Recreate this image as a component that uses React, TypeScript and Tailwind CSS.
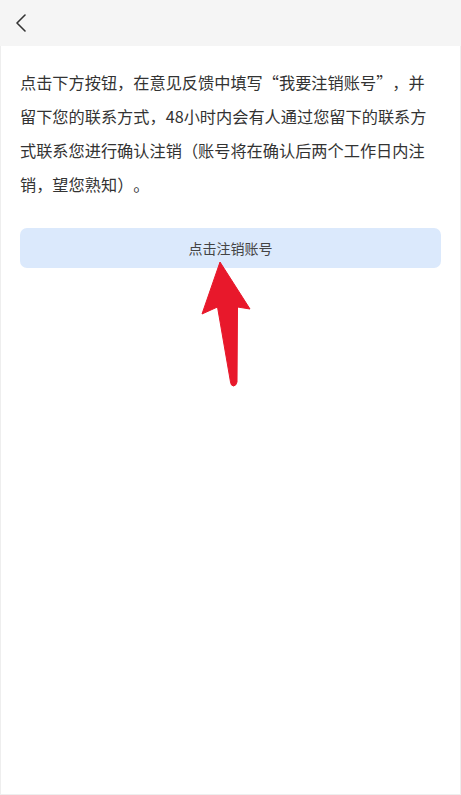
import React from 'react';

const ArrowMark: React.FC = () => (
    <svg
        className="absolute left-0 top-0 pointer-events-none"
        width="461"
        height="795"
        viewBox="0 0 461 795"
    >
        <path
            d="M220 262 L250 309 L237.5 307 L237 382 Q236 386 233.5 386 Q231 386 230.5 382 L217.5 307 L202 314 Z"
            fill="#e8182b"
            stroke="#e8182b"
            strokeWidth="1"
            strokeLinejoin="round"
        />
    </svg>
);

// full-width box for punctuation the font renders narrow
const Wide: React.FC<{ children: React.ReactNode; align: 'left' | 'right' }> = ({ children, align }) => (
    <span className={align === 'left' ? 'inline-block w-[1em] text-left' : 'inline-block w-[1em] text-right'}>
        {children}
    </span>
);

const App: React.FC = () => {
    const handleClick = () => {
        console.log('go to feedback');
    };

    return (
        <div className="relative min-h-[795px] w-[461px] bg-white text-[#333333] font-['Noto_Sans_CJK_SC','Noto_Sans',sans-serif]">
            <div className="h-[46px] bg-[#f5f5f5] flex items-center px-[16px]">
                <button className="w-[14px] h-[20px] flex items-center" aria-label="返回">
                    <svg width="10" height="18" viewBox="0 0 10 18">
                        <path d="M9 1 L1 9 L9 17" fill="none" stroke="#333333" strokeWidth="1.6" strokeLinecap="round" strokeLinejoin="round" />
                    </svg>
                </button>
            </div>

            <div className="min-h-[749px] border-x border-b border-[#eeeeee] px-[19px] pt-[19px]">
                <p className="text-[16.2px] leading-[34px] text-[#333333] whitespace-nowrap">
                    点击下方按钮，在意见反馈中填写<Wide align="right">“</Wide>我要注销账号<Wide align="left">”</Wide>，并
                    <br />
                    留下您的联系方式，48小时内会有人通过您留下的联系方
                    <br />
                    式联系您进行确认注销<Wide align="right">（</Wide>账号将在确认后两个工作日内注
                    <br />
                    销，望您熟知<Wide align="left">）</Wide>。
                </p>

                <button
                    onClick={handleClick}
                    className="mt-[27px] w-full h-[40px] rounded-[7px] bg-[#dbe9fc] text-[14px] text-[#444444] flex items-center justify-center"
                >
                    点击注销账号
                </button>
            </div>

            <ArrowMark />
        </div>
    );
};

export default App;
